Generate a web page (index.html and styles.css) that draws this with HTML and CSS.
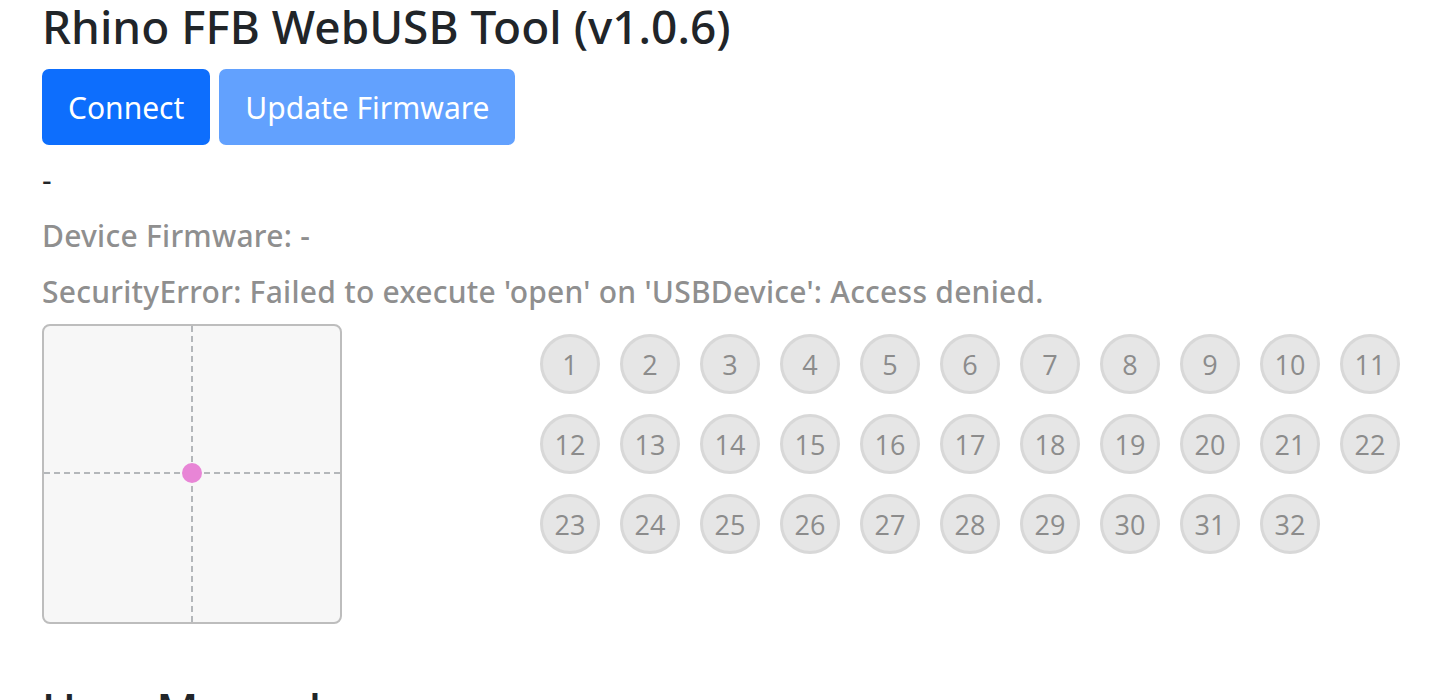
FILE: index.html
```html
<!DOCTYPE html>
<html lang="en">
<head>
<meta charset="utf-8">
<title>Rhino FFB WebUSB Tool</title>
<link rel="stylesheet" href="styles.css">
</head>
<body>
<div class="container">
  <h1 class="title">Rhino FFB WebUSB Tool (v1.0.6)</h1>
  <div class="actions">
    <button class="btn btn-primary">Connect</button>
    <button class="btn btn-disabled">Update Firmware</button>
  </div>
  <div class="status">
    <p class="line dark">-</p>
    <p class="line muted">Device Firmware: -</p>
    <p class="line muted">SecurityError: Failed to execute 'open' on 'USBDevice': Access denied.</p>
  </div>
  <div class="inputs">
    <div class="stick">
      <svg class="cross" width="296" height="296" viewBox="0 0 296 296">
        <line x1="148" y1="0" x2="148" y2="296" stroke="#b4b7ba" stroke-width="2" stroke-dasharray="6 4"/>
        <line x1="0" y1="147" x2="296" y2="147" stroke="#b4b7ba" stroke-width="2" stroke-dasharray="6 4"/>
      </svg>
      <span class="dot"></span>
    </div>
    <div class="buttons">
      <span class="b">1</span><span class="b">2</span><span class="b">3</span><span class="b">4</span><span class="b">5</span><span class="b">6</span><span class="b">7</span><span class="b">8</span><span class="b">9</span><span class="b">10</span><span class="b">11</span>
      <span class="b">12</span><span class="b">13</span><span class="b">14</span><span class="b">15</span><span class="b">16</span><span class="b">17</span><span class="b">18</span><span class="b">19</span><span class="b">20</span><span class="b">21</span><span class="b">22</span>
      <span class="b">23</span><span class="b">24</span><span class="b">25</span><span class="b">26</span><span class="b">27</span><span class="b">28</span><span class="b">29</span><span class="b">30</span><span class="b">31</span><span class="b">32</span>
    </div>
  </div>
  <h2 class="title section">User Manual</h2>
</div>
</body>
</html>
```
FILE: styles.css
```css
html, body {
  margin: 0;
  padding: 0;
  background: #ffffff;
}
body {
  font-family: "Noto Sans", "Open Sans", sans-serif;
  color: #212529;
}
.container {
  padding: 0 42px;
}
.title {
  margin: 0;
  font-size: 46px;
  font-weight: 500;
  line-height: 53px;
  color: #212529;
}
.actions {
  display: flex;
  gap: 9px;
  margin-top: 16px;
}
.btn {
  height: 76px;
  padding: 0 26px;
  border: none;
  border-radius: 7px;
  font-family: "Noto Sans", "Open Sans", sans-serif;
  font-size: 30px;
  color: #ffffff;
}
.btn-primary {
  background: #0d6efd;
}
.btn-disabled {
  background: #62a1fe;
}
.status {
  margin-top: 7px;
}
.line {
  margin: 0;
  font-size: 30px;
  line-height: 56px;
  letter-spacing: 0.25px;
}
.dark {
  color: #212529;
}
.muted {
  color: #8f8f8f;
  font-weight: 500;
}
.inputs {
  display: flex;
  align-items: flex-start;
  margin-top: 4px;
}
.stick {
  position: relative;
  flex: 0 0 auto;
  width: 296px;
  height: 296px;
  border: 2px solid #bdbdbd;
  border-radius: 8px;
  background: #f7f7f7;
  overflow: hidden;
}
.cross {
  display: block;
}
.dot {
  position: absolute;
  left: 138px;
  top: 137px;
  width: 20px;
  height: 20px;
  border-radius: 50%;
  background: #e885d6;
}
.buttons {
  flex: 0 0 auto;
  display: grid;
  grid-template-columns: repeat(11, 60px);
  grid-auto-rows: 60px;
  gap: 20px;
  margin-left: 198px;
  margin-top: 10px;
}
.b {
  box-sizing: border-box;
  display: flex;
  align-items: center;
  justify-content: center;
  width: 60px;
  height: 60px;
  border: 3px solid #d8d8d8;
  border-radius: 50%;
  background: #e6e6e6;
  color: #8c8c8c;
  font-family: "Open Sans", "Noto Sans", sans-serif;
  font-size: 27px;
}
.section {
  margin-top: 59px;
}
```
